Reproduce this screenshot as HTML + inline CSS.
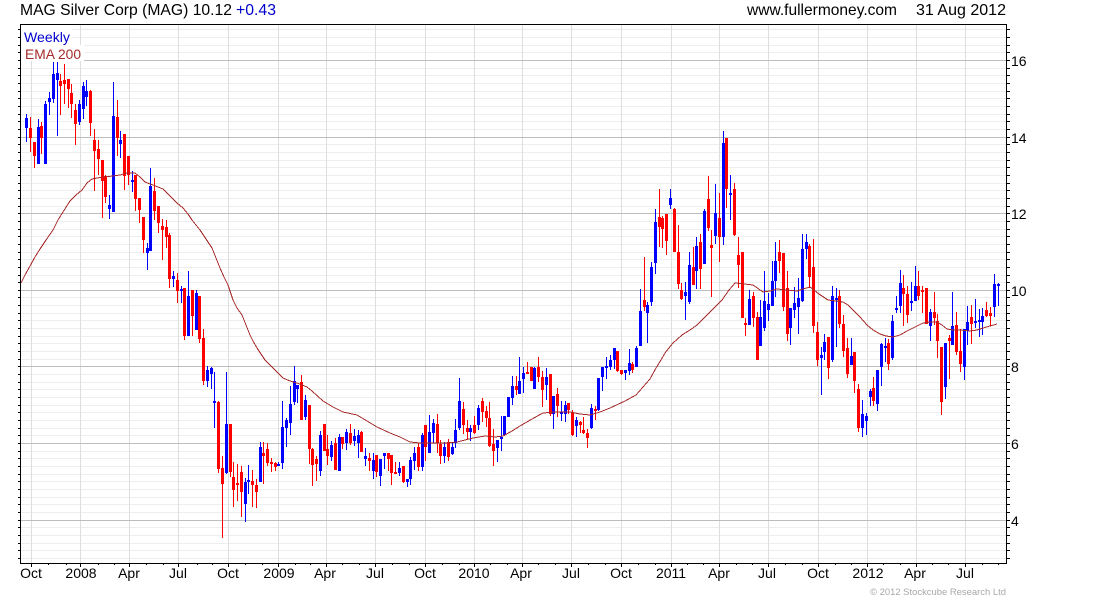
<!DOCTYPE html>
<html>
<head>
<meta charset="utf-8">
<title>MAG Silver Corp</title>
<style>
html,body{margin:0;padding:0;background:#fff;width:1100px;height:600px;overflow:hidden}
svg{display:block;position:absolute;left:0;top:0}
text{font-family:"Liberation Sans",Arial,sans-serif;fill:#000}
</style>
</head>
<body>
<svg width="1100" height="600" viewBox="0 0 1100 600" xmlns="http://www.w3.org/2000/svg">
<rect width="1100" height="600" fill="#fff"/>
<g shape-rendering="crispEdges" fill="none">
<!-- minor horizontal grid -->
<path stroke="#eeeeee" d="M21 29.5H1006M21 37.5H1006M21 45.5H1006M21 52.5H1006M21 68.5H1006M21 75.5H1006M21 83.5H1006M21 91.5H1006M21 98.5H1006M21 106.5H1006M21 114.5H1006M21 121.5H1006M21 129.5H1006M21 144.5H1006M21 152.5H1006M21 160.5H1006M21 167.5H1006M21 175.5H1006M21 183.5H1006M21 190.5H1006M21 198.5H1006M21 206.5H1006M21 221.5H1006M21 229.5H1006M21 236.5H1006M21 244.5H1006M21 252.5H1006M21 259.5H1006M21 267.5H1006M21 275.5H1006M21 282.5H1006M21 297.5H1006M21 305.5H1006M21 313.5H1006M21 320.5H1006M21 328.5H1006M21 336.5H1006M21 343.5H1006M21 351.5H1006M21 359.5H1006M21 374.5H1006M21 382.5H1006M21 389.5H1006M21 397.5H1006M21 405.5H1006M21 412.5H1006M21 420.5H1006M21 428.5H1006M21 435.5H1006M21 451.5H1006M21 458.5H1006M21 466.5H1006M21 474.5H1006M21 481.5H1006M21 489.5H1006M21 497.5H1006M21 504.5H1006M21 512.5H1006M21 527.5H1006M21 535.5H1006M21 543.5H1006M21 550.5H1006M21 558.5H1006"/>
<!-- vertical grid -->
<path stroke="#dedede" d="M31.5 25V563M80.5 25V563M129.5 25V563M178.5 25V563M228.5 25V563M278.5 25V563M326.5 25V563M375.5 25V563M425.5 25V563M474.5 25V563M522.5 25V563M571.5 25V563M621.5 25V563M671.5 25V563M719.5 25V563M768.5 25V563M818.5 25V563M867.5 25V563M916.5 25V563M965.5 25V563"/>
<!-- major horizontal grid -->
<path stroke="#bdbdbd" d="M21 60.5H1006M21 137.5H1006M21 213.5H1006M21 290.5H1006M21 366.5H1006M21 443.5H1006M21 520.5H1006"/>
<!-- label backgrounds -->
<rect x="21" y="25" width="51" height="20" fill="#fff"/>
<rect x="21" y="45" width="63" height="16" fill="#fff"/>

<!-- blue wicks -->
<path stroke="#0000ff" d="M26.5 114V142M38.5 119V164M45.5 101V164M49.5 92V115M53.5 62V103M57.5 62V136M79.5 100V125M83.5 82V119M86.5 80V106M109.5 195V219M113.5 82V212M120.5 131V158M132.5 171V192M147.5 243V270M150.5 168V251M173.5 271V287M181.5 286V303M188.5 271V336M196.5 290V330M207.5 366V387M211.5 367V389M214.5 372V428M226.5 372V474M245.5 478V522M248.5 465V494M260.5 442V482M278.5 462V466M282.5 401V469M286.5 418V447M290.5 386V435M294.5 366V405M297.5 385V403M305.5 395V420M320.5 431V476M331.5 441V461M339.5 434V471M346.5 429V450M354.5 429V446M358.5 430V458M365.5 448V466M373.5 453V479M380.5 459V486M384.5 453V469M399.5 462V476M407.5 479V487M410.5 457V485M414.5 447V470M422.5 433V471M429.5 415V453M433.5 419V443M444.5 442V463M452.5 442V455M455.5 419V448M459.5 378V430M470.5 425V441M478.5 405V430M497.5 440V462M501.5 416V451M504.5 416V436M508.5 397V417M512.5 376V405M519.5 357V394M523.5 367V393M534.5 367V389M546.5 368V400M553.5 396V429M561.5 401V421M565.5 401V422M576.5 417V437M591.5 404V429M598.5 378V411M602.5 367V391M606.5 357V379M610.5 355V370M614.5 348V369M625.5 370V380M629.5 349V375M636.5 346V367M640.5 289V346M647.5 302V343M651.5 262V306M655.5 209V274M670.5 189V209M685.5 282V320M689.5 252V304M696.5 237V289M704.5 209V264M715.5 184V244M723.5 131V245M730.5 175V220M749.5 290V325M760.5 300V346M764.5 271V331M768.5 293V321M772.5 261V306M775.5 242V297M790.5 308V345M794.5 287V318M798.5 278V334M802.5 234V302M806.5 234V259M821.5 347V395M824.5 334V360M832.5 286V362M836.5 288V347M851.5 338V365M862.5 400V437M866.5 413V435M870.5 389V406M877.5 370V411M881.5 343V386M885.5 338V362M892.5 315V360M896.5 296V313M900.5 270V313M911.5 282V311M915.5 266V301M930.5 309V341M945.5 343V399M952.5 292V345M964.5 329V380M967.5 306V345M975.5 299V328M979.5 309V337M982.5 308V335M994.5 274V317M998.5 283V306"/>
<!-- red wicks -->
<path stroke="#ff0000" d="M30.5 117V152M34.5 142V168M41.5 122V154M60.5 74V115M64.5 64V104M68.5 79V108M71.5 84V118M75.5 104V145M90.5 90V136M94.5 129V191M98.5 140V175M102.5 160V218M105.5 175V203M117.5 100V156M124.5 134V190M128.5 156V185M135.5 175V211M139.5 198V223M143.5 217V253M154.5 178V220M158.5 206V233M162.5 219V260M166.5 220V248M169.5 233V288M177.5 273V303M184.5 288V340M192.5 290V336M199.5 296V343M203.5 329V385M218.5 401V473M222.5 456V538M230.5 424V477M233.5 462V507M237.5 464V501M241.5 466V517M252.5 470V507M256.5 479V508M263.5 442V484M267.5 443V466M271.5 458V472M275.5 462V471M301.5 375V420M309.5 405V464M312.5 448V486M316.5 456V481M324.5 424V451M327.5 435V465M335.5 438V470M342.5 437V449M350.5 424V445M361.5 431V452M369.5 453V471M376.5 455V477M388.5 453V471M391.5 455V485M395.5 462V474M403.5 466V483M418.5 443V471M425.5 425V461M437.5 414V453M440.5 440V464M448.5 439V461M463.5 402V434M467.5 420V439M474.5 416V434M482.5 398V422M486.5 406V427M489.5 402V447M493.5 429V466M516.5 376V395M527.5 362V374M531.5 367V381M538.5 357V382M542.5 371V407M550.5 374V416M557.5 388V417M568.5 403V414M572.5 410V436M580.5 421V433M583.5 417V434M587.5 429V448M595.5 406V420M617.5 351V372M621.5 370V375M632.5 362V373M644.5 257V311M659.5 189V247M662.5 216V248M666.5 214V255M674.5 208V252M678.5 225V289M681.5 283V300M693.5 247V285M700.5 234V289M708.5 176V231M711.5 230V297M719.5 193V262M726.5 138V208M734.5 183V236M738.5 237V288M742.5 252V318M745.5 318V336M753.5 292V327M757.5 312V360M779.5 240V273M783.5 253V311M787.5 271V341M809.5 244V288M813.5 239V333M817.5 322V366M828.5 337V379M839.5 290V328M843.5 315V357M847.5 338V378M854.5 352V393M858.5 384V432M873.5 377V406M888.5 339V370M903.5 275V326M907.5 286V323M918.5 271V300M922.5 286V313M926.5 288V324M934.5 292V325M937.5 314V358M941.5 347V415M949.5 335V379M956.5 312V355M960.5 329V372M971.5 305V344M986.5 302V317M990.5 307V326"/>
<!-- blue bodies -->
<path stroke="#0000ff" stroke-width="3" d="M26.5 118V128M38.5 127V164M45.5 104V164M49.5 98V102M53.5 74V99M57.5 73V80M79.5 104V122M83.5 86V109M86.5 91V97M109.5 205V209M113.5 116V212M120.5 140V144M132.5 180V182M147.5 248V253M150.5 186V251M173.5 276V279M181.5 289V291M188.5 296V336M196.5 293V330M207.5 370V381M211.5 368V374M214.5 401V403M226.5 424V473M245.5 482V504M248.5 480V482M260.5 447V482M278.5 464V466M282.5 427V463M286.5 420V428M290.5 404V423M294.5 381V402M297.5 385V389M305.5 400V417M320.5 435V471M331.5 445V457M339.5 437V471M346.5 432V443M354.5 436V441M358.5 435V443M365.5 456V459M373.5 460V471M380.5 459V476M384.5 453V456M399.5 468V473M407.5 479V482M410.5 460V479M414.5 453V461M422.5 435V467M429.5 432V453M433.5 423V433M444.5 447V456M452.5 447V454M455.5 430V443M459.5 401V428M470.5 428V432M478.5 408V425M497.5 440V448M501.5 437V439M504.5 416V435M508.5 397V417M512.5 386V398M519.5 381V394M523.5 373V379M534.5 368V389M546.5 377V385M553.5 396V414M561.5 412V414M565.5 405V414M576.5 420V426M591.5 408V428M598.5 378V410M602.5 367V377M606.5 366V368M610.5 360V367M614.5 348V360M625.5 370V373M629.5 363V371M636.5 348V367M640.5 311V346M647.5 305V313M651.5 267V302M655.5 222V263M670.5 198V205M685.5 292V296M689.5 265V302M696.5 246V271M704.5 211V264M715.5 213V236M723.5 143V237M730.5 193V195M749.5 299V325M760.5 317V346M764.5 301V328M768.5 304V310M772.5 281V306M775.5 261V281M790.5 308V328M794.5 303V310M798.5 298V307M802.5 249V301M806.5 242V249M821.5 355V358M824.5 342V352M832.5 296V360M836.5 298V300M851.5 356V365M862.5 414V428M866.5 416V421M870.5 391V397M877.5 370V404M881.5 344V367M885.5 346V348M892.5 321V358M896.5 308V310M900.5 283V306M911.5 301V303M915.5 286V301M930.5 312V326M945.5 343V387M952.5 326V345M964.5 329V367M967.5 322V331M975.5 321V323M979.5 320V322M982.5 316V322M994.5 284V307M998.5 284V286"/>
<!-- red bodies -->
<path stroke="#ff0000" stroke-width="3" d="M30.5 128V138M34.5 142V156M41.5 126V138M60.5 81V86M64.5 80V84M68.5 79V89M71.5 93V104M75.5 110V124M90.5 91V123M94.5 140V151M98.5 149V159M102.5 160V181M105.5 176V197M117.5 117V138M124.5 134V176M128.5 156V175M135.5 175V199M139.5 198V210M143.5 217V240M154.5 191V211M158.5 206V223M162.5 226V230M166.5 227V237M169.5 235V279M177.5 280V291M184.5 288V336M192.5 290V316M199.5 296V339M203.5 338V381M218.5 402V469M222.5 468V484M230.5 424V472M233.5 477V490M237.5 483V485M241.5 472V492M252.5 481V485M256.5 485V492M263.5 453V456M267.5 449V463M271.5 462V464M275.5 463V467M301.5 382V420M309.5 405V449M312.5 449V465M316.5 459V464M324.5 424V451M327.5 449V456M335.5 443V470M342.5 437V444M350.5 433V443M361.5 432V452M369.5 458V461M376.5 455V472M388.5 453V459M391.5 455V473M395.5 472V474M403.5 466V482M418.5 447V467M425.5 425V447M437.5 424V443M440.5 444V456M448.5 442V457M463.5 409V425M467.5 428V432M474.5 425V433M482.5 401V412M486.5 411V418M489.5 418V446M493.5 444V451M516.5 386V390M527.5 372V374M531.5 367V381M538.5 367V377M542.5 377V390M550.5 374V414M557.5 394V406M568.5 403V410M572.5 412V435M580.5 422V425M583.5 430V433M587.5 433V438M595.5 409V411M617.5 351V371M621.5 370V374M632.5 364V370M644.5 300V307M659.5 217V227M662.5 218V229M666.5 214V241M674.5 209V252M678.5 252V284M681.5 290V299M693.5 267V285M700.5 242V269M708.5 199V228M711.5 245V248M719.5 218V237M726.5 138V189M734.5 189V235M738.5 255V265M742.5 252V318M745.5 323V325M753.5 296V318M757.5 317V360M779.5 252V261M783.5 253V307M787.5 288V334M809.5 246V277M813.5 267V326M817.5 332V360M828.5 337V368M839.5 296V324M843.5 324V351M847.5 348V374M854.5 352V381M858.5 389V428M873.5 388V401M888.5 343V364M903.5 288V294M907.5 294V315M918.5 286V296M922.5 290V292M926.5 288V324M934.5 312V318M937.5 321V341M941.5 347V402M949.5 338V341M956.5 325V352M960.5 351V364M971.5 317V324M986.5 310V316M990.5 313V316"/>
<!-- EMA -->
<polyline stroke="#a52a2a" stroke-width="1" points="21,283 25,275 30,266 35,257 40,249 46,240 53,230 58,220 63,212 70,201 76,195 82,190 87,183 92,179 97,178 103,177 113,176 120,175 127,173 135,173 140,177 145,182 153,185 163,189 170,196 177,203 183,208 188,214 192,220 200,230 206,239 212,248 216,258 220,268 224,277 228,285 233,300 237,308 242,315 246,325 250,335 253,341 257,348 265,360 271,366 277,372 283,378 290,381 297,383 307,387 312,391 323,401 333,407 343,412 357,415 367,421 377,427 390,433 400,437 410,442 420,443 433,443 445,443 457,442 473,438 485,436 495,437 503,436 512,431 520,426 532,419 543,413 556,412 570,412 580,414 590,415 600,412 610,408 625,401 636,395 643,387 650,379 656,368 661,360 665,353 673,343 682,335 690,330 697,325 705,317 714,308 722,300 729,290 735,283 744,284 753,285 763,292 770,291 777,289 787,290 797,291 803,289 810,287 819,294 828,300 836,301 843,302 848,305 853,310 860,317 867,325 873,330 880,334 886,336 893,337 900,335 907,331 915,327 923,323 930,322 937,322 942,325 947,329 953,330 960,330 970,331 977,330 983,328 990,326 997,324"/>

<!-- frame -->
<path stroke="#000" d="M20.5 24.5H1006.5V563.5H20.5Z"/>
<!-- y ticks -->
<path stroke="#000" d="M18 29.5h2M18 37.5h2M18 45.5h2M18 52.5h2M18 60.5h2M18 68.5h2M18 75.5h2M18 83.5h2M18 91.5h2M18 98.5h2M18 106.5h2M18 114.5h2M18 121.5h2M18 129.5h2M18 137.5h2M18 144.5h2M18 152.5h2M18 160.5h2M18 167.5h2M18 175.5h2M18 183.5h2M18 190.5h2M18 198.5h2M18 206.5h2M18 213.5h2M18 221.5h2M18 229.5h2M18 236.5h2M18 244.5h2M18 252.5h2M18 259.5h2M18 267.5h2M18 275.5h2M18 282.5h2M18 290.5h2M18 297.5h2M18 305.5h2M18 313.5h2M18 320.5h2M18 328.5h2M18 336.5h2M18 343.5h2M18 351.5h2M18 359.5h2M18 366.5h2M18 374.5h2M18 382.5h2M18 389.5h2M18 397.5h2M18 405.5h2M18 412.5h2M18 420.5h2M18 428.5h2M18 435.5h2M18 443.5h2M18 451.5h2M18 458.5h2M18 466.5h2M18 474.5h2M18 481.5h2M18 489.5h2M18 497.5h2M18 504.5h2M18 512.5h2M18 520.5h2M18 527.5h2M18 535.5h2M18 543.5h2M18 550.5h2M18 558.5h2"/>
<path stroke="#000" d="M1007 29.5h3M1007 37.5h3M1007 45.5h3M1007 52.5h3M1007 60.5h3M1007 68.5h3M1007 75.5h3M1007 83.5h3M1007 91.5h3M1007 98.5h3M1007 106.5h3M1007 114.5h3M1007 121.5h3M1007 129.5h3M1007 137.5h3M1007 144.5h3M1007 152.5h3M1007 160.5h3M1007 167.5h3M1007 175.5h3M1007 183.5h3M1007 190.5h3M1007 198.5h3M1007 206.5h3M1007 213.5h3M1007 221.5h3M1007 229.5h3M1007 236.5h3M1007 244.5h3M1007 252.5h3M1007 259.5h3M1007 267.5h3M1007 275.5h3M1007 282.5h3M1007 290.5h3M1007 297.5h3M1007 305.5h3M1007 313.5h3M1007 320.5h3M1007 328.5h3M1007 336.5h3M1007 343.5h3M1007 351.5h3M1007 359.5h3M1007 366.5h3M1007 374.5h3M1007 382.5h3M1007 389.5h3M1007 397.5h3M1007 405.5h3M1007 412.5h3M1007 420.5h3M1007 428.5h3M1007 435.5h3M1007 443.5h3M1007 451.5h3M1007 458.5h3M1007 466.5h3M1007 474.5h3M1007 481.5h3M1007 489.5h3M1007 497.5h3M1007 504.5h3M1007 512.5h3M1007 520.5h3M1007 527.5h3M1007 535.5h3M1007 543.5h3M1007 550.5h3M1007 558.5h3"/>
<!-- x ticks -->
<path stroke="#000" d="M31.5 564v3M80.5 564v3M129.5 564v3M178.5 564v3M228.5 564v3M278.5 564v3M326.5 564v3M375.5 564v3M425.5 564v3M474.5 564v3M522.5 564v3M571.5 564v3M621.5 564v3M671.5 564v3M719.5 564v3M768.5 564v3M818.5 564v3M867.5 564v3M916.5 564v3M965.5 564v3M48.5 564v1M66.5 564v1M98.5 564v1M114.5 564v1M146.5 564v1M163.5 564v1M197.5 564v1M212.5 564v1M245.5 564v1M262.5 564v1M295.5 564v1M310.5 564v1M342.5 564v1M359.5 564v1M392.5 564v1M409.5 564v1M442.5 564v1M459.5 564v1M490.5 564v1M507.5 564v1M538.5 564v1M555.5 564v1M588.5 564v1M605.5 564v1M638.5 564v1M655.5 564v1M687.5 564v1M703.5 564v1M736.5 564v1M752.5 564v1M785.5 564v1M802.5 564v1M835.5 564v1M851.5 564v1M883.5 564v1M900.5 564v1M932.5 564v1M948.5 564v1M982.5 564v1M998.5 564v1"/>
</g>

<!-- header -->
<text x="20" y="15" font-size="16" textLength="212" lengthAdjust="spacingAndGlyphs">MAG Silver Corp (MAG) 10.12</text>
<text x="236" y="15" font-size="16" textLength="40" lengthAdjust="spacingAndGlyphs" style="fill:#0000cd">+0.43</text>
<text x="747" y="15" font-size="16" textLength="150" lengthAdjust="spacingAndGlyphs">www.fullermoney.com</text>
<text x="916" y="15" font-size="16" textLength="90" lengthAdjust="spacingAndGlyphs">31 Aug 2012</text>
<!-- legend -->
<text x="24" y="42" font-size="14" textLength="46" lengthAdjust="spacingAndGlyphs" style="fill:#0000cd">Weekly</text>
<text x="25" y="59" font-size="14" textLength="56" lengthAdjust="spacingAndGlyphs" style="fill:#a52a2a">EMA 200</text>
<!-- y axis labels -->
<g font-size="14">
<text x="1011" y="66">16</text>
<text x="1011" y="143">14</text>
<text x="1011" y="219">12</text>
<text x="1011" y="296">10</text>
<text x="1011" y="372">8</text>
<text x="1011" y="449">6</text>
<text x="1011" y="526">4</text>
</g>
<!-- x axis labels -->
<g font-size="14" text-anchor="middle">
<text x="31" y="578">Oct</text>
<text x="81" y="578">2008</text>
<text x="129" y="578">Apr</text>
<text x="178" y="578">Jul</text>
<text x="228" y="578">Oct</text>
<text x="279" y="578">2009</text>
<text x="325" y="578">Apr</text>
<text x="375" y="578">Jul</text>
<text x="425" y="578">Oct</text>
<text x="474" y="578">2010</text>
<text x="521" y="578">Apr</text>
<text x="571" y="578">Jul</text>
<text x="621" y="578">Oct</text>
<text x="671" y="578">2011</text>
<text x="719" y="578">Apr</text>
<text x="767" y="578">Jul</text>
<text x="818" y="578">Oct</text>
<text x="868" y="578">2012</text>
<text x="915" y="578">Apr</text>
<text x="965" y="578">Jul</text>
</g>
<text x="870" y="595" font-size="9.5" textLength="136" lengthAdjust="spacingAndGlyphs" style="fill:#a8a8a8">© 2012 Stockcube Research Ltd</text>
</svg>
</body>
</html>
